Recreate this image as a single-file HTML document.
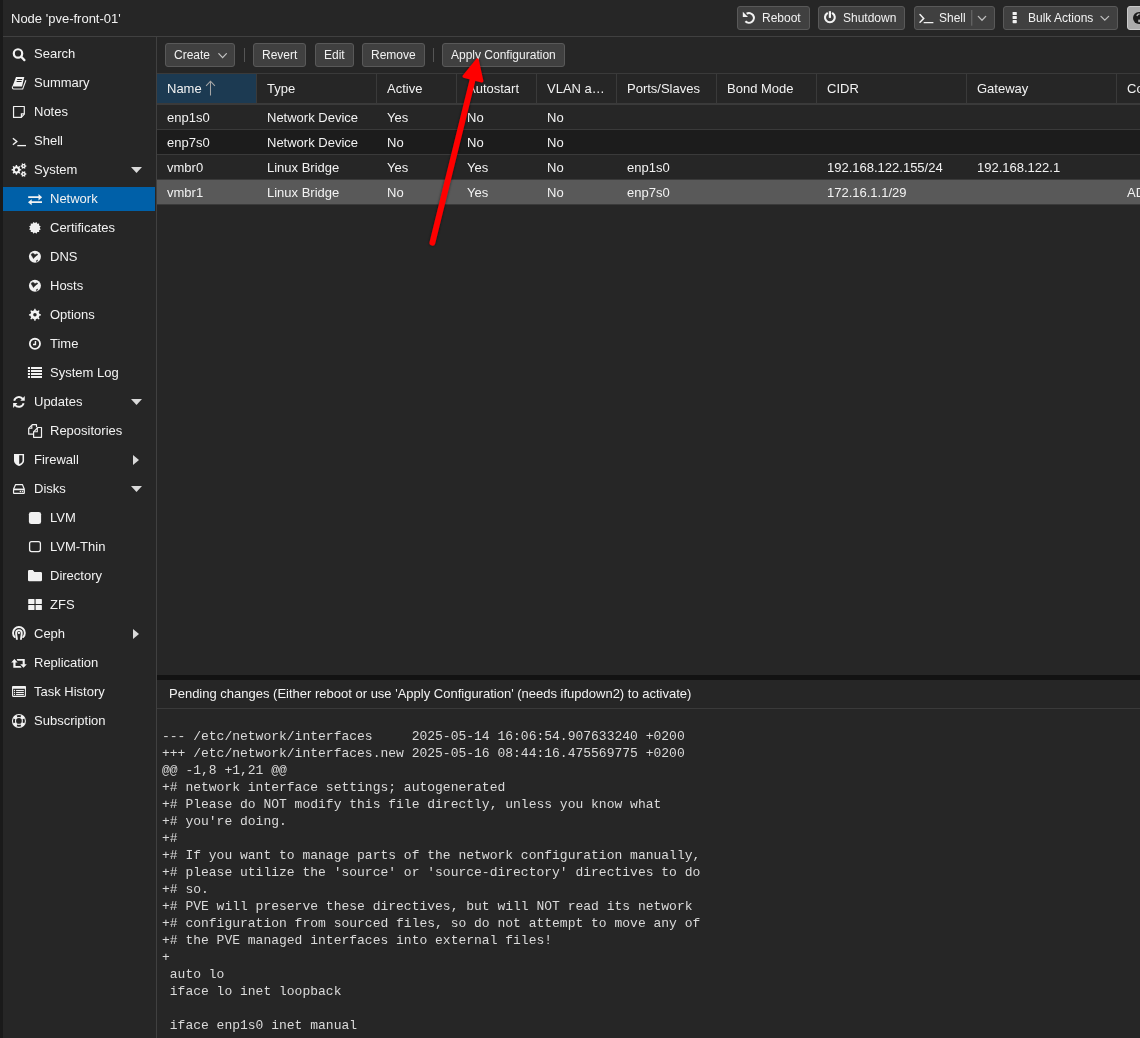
<!DOCTYPE html>
<html><head><meta charset="utf-8">
<style>
*{box-sizing:border-box;margin:0;padding:0}
body{-webkit-font-smoothing:antialiased;will-change:transform}
html,body{width:1140px;height:1038px;overflow:hidden;background:#262626;font-family:"Liberation Sans",sans-serif;font-size:13px;color:#f2f2f2}
.abs{position:absolute}
#strip{left:0;top:0;width:3px;height:1038px;background:#1a1a1a}
#hdr{left:3px;top:0;width:1137px;height:37px;background:#262626;border-bottom:1px solid #404040}
#title{left:11px;top:11px;line-height:16px;white-space:nowrap}
.tb{position:absolute;top:6px;height:24px;border:1px solid #595959;border-radius:3px;background:#404040;white-space:nowrap}
.tb span{position:absolute;top:4px;line-height:15px;font-size:12px}
.tb svg{position:absolute}
#side{left:3px;top:37px;width:153px;height:1001px;background:#262626}
.si{position:absolute;left:3px;width:152px;height:24px;white-space:nowrap}
.si span{position:absolute;top:4px;line-height:16px}
.si svg{position:absolute;fill:#f2f2f2}
.sel{background:#0060a8}
#main{left:156px;top:37px;width:984px;height:1001px;background:#262626;border-left:1px solid #404040}
.btn{position:absolute;top:43px;height:24px;border:1px solid #595959;border-radius:3px;background:#404040;white-space:nowrap}
.btn span{position:absolute;top:4px;line-height:15px;font-size:12px}
.sep{position:absolute;top:48px;width:1px;height:14px;background:#555}
#gh{left:157px;top:73px;width:983px;height:32px;background:#262626;border-top:1px solid #3a3a3a;border-bottom:2px solid #3a3a3a}
.hc{position:absolute;top:0;height:29px;border-right:1px solid #3a3a3a;white-space:nowrap}
.hc span{position:absolute;left:10px;top:7px;line-height:15px}
.row{position:absolute;left:157px;width:983px;height:25px;border-bottom:1px solid #3a3a3a;white-space:nowrap}
.row span{position:absolute;top:5px;line-height:15px}
.alt{background:#1c1c1c}
.rsel{background:#595959}
#split{left:157px;top:675px;width:983px;height:5px;background:#121212}
#ph{left:157px;top:680px;width:983px;height:29px;background:#262626;border-bottom:1px solid #3a3a3a}
#ph span{position:absolute;left:12px;top:6px;line-height:15px;white-space:nowrap}
#pre{left:162px;top:728px;font-family:"Liberation Mono",monospace;font-size:13px;line-height:17px;white-space:pre;color:#dadada}
</style></head><body>
<div class="abs" id="strip"></div>
<div class="abs" id="hdr"></div>
<div class="abs" id="title">Node 'pve-front-01'</div>

<!-- top buttons -->
<div class="tb" style="left:737px;width:73px"><span style="left:24px">Reboot</span></div>
<div class="tb" style="left:818px;width:87px"><span style="left:24px">Shutdown</span></div>
<div class="tb" style="left:914px;width:81px"><span style="left:24px">Shell</span></div>
<div class="tb" style="left:1003px;width:115px"><span style="left:24px">Bulk Actions</span></div>
<div class="tb" style="left:1127px;width:40px;background:#ababab;border-color:#cacaca"></div>
<svg class="abs" style="left:700px;top:0" width="440" height="36" viewBox="700 0 440 36">
 <path d="M745.4 21.3 A4.9 4.9 0 1 0 746.6 13.6" fill="none" stroke="#f2f2f2" stroke-width="2.1"/>
 <path d="M742.8 11.8 V17 H748 Z" fill="#f2f2f2"/>
 <path d="M827.1 13.4 A4.9 4.9 0 1 0 832.7 13.4" fill="none" stroke="#f2f2f2" stroke-width="2.1" stroke-linecap="round"/>
 <path d="M829.9 11.2 V17.9" stroke="#f2f2f2" stroke-width="2.2"/>
 <path d="M920 14.6 L923.7 18.4 L920 22.2" fill="none" stroke="#f2f2f2" stroke-width="1.5" stroke-linecap="round"/>
 <path d="M924.2 22.7 H932.9" stroke="#f2f2f2" stroke-width="1.3" stroke-linecap="round"/>
 <rect x="971.2" y="10" width="1.1" height="15.7" fill="#6a6a6a"/>
 <path d="M978.3 16.4 L982 20.2 L985.7 16.4" fill="none" stroke="#bdbdbd" stroke-width="1.3" stroke-linecap="round"/>
 <rect x="1012.6" y="11.9" width="4.2" height="3.1" rx="0.6" fill="#f2f2f2"/>
 <rect x="1012.6" y="16" width="4.2" height="3.1" rx="0.6" fill="#f2f2f2"/>
 <rect x="1012.6" y="20.1" width="4.2" height="3.1" rx="0.6" fill="#f2f2f2"/>
 <path d="M1101 16.4 L1104.8 20.2 L1108.6 16.4" fill="none" stroke="#bdbdbd" stroke-width="1.3" stroke-linecap="round"/>
 <circle cx="1139" cy="18" r="6" fill="#1a1a1a"/>
 <path d="M1137 16 Q1137.4 14 1139.6 14" fill="none" stroke="#ababab" stroke-width="1.5"/><rect x="1138.2" y="19.6" width="2" height="2.6" fill="#ababab"/>
</svg>
<div class="abs" id="side"></div>
<div class="abs" id="main"></div>

<!-- toolbar -->
<div class="btn" style="left:165px;width:70px"><span style="left:8px">Create</span>
 <svg style="position:absolute;left:52px;top:9px" width="10" height="7" viewBox="0 0 10 7"><path d="M0.8 0.6 L4.6 4.6 L8.4 0.6" fill="none" stroke="#c4c4c4" stroke-width="1.2" stroke-linecap="round"/></svg></div>
<div class="sep" style="left:244px"></div>
<div class="btn" style="left:253px;width:53px"><span style="left:8px">Revert</span></div>
<div class="btn" style="left:315px;width:39px"><span style="left:8px">Edit</span></div>
<div class="btn" style="left:362px;width:63px"><span style="left:8px">Remove</span></div>
<div class="sep" style="left:433px"></div>
<div class="btn" style="left:442px;width:123px"><span style="left:8px">Apply Configuration</span></div>

<!-- grid header -->
<div class="abs" id="gh">
 <div class="hc" style="left:0;width:100px;background:#1c3a52"><span>Name</span>
  <svg style="position:absolute;left:48px;top:6px" width="11" height="16" viewBox="0 0 11 16"><path d="M5.5 1.2 V15.6 M1.1 5.9 L5.5 1.2 L9.9 5.9" fill="none" stroke="#a6a6a6" stroke-width="1.05"/></svg></div>
 <div class="hc" style="left:100px;width:120px"><span>Type</span></div>
 <div class="hc" style="left:220px;width:80px"><span>Active</span></div>
 <div class="hc" style="left:300px;width:80px"><span>Autostart</span></div>
 <div class="hc" style="left:380px;width:80px"><span>VLAN a…</span></div>
 <div class="hc" style="left:460px;width:100px"><span>Ports/Slaves</span></div>
 <div class="hc" style="left:560px;width:100px"><span>Bond Mode</span></div>
 <div class="hc" style="left:660px;width:150px"><span>CIDR</span></div>
 <div class="hc" style="left:810px;width:150px"><span>Gateway</span></div>
 <div class="hc" style="left:960px;width:150px"><span>Comment</span></div>
</div>

<!-- rows -->
<div class="row" style="top:105px"><span style="left:10px">enp1s0</span><span style="left:110px">Network Device</span><span style="left:230px">Yes</span><span style="left:310px">No</span><span style="left:390px">No</span></div>
<div class="row alt" style="top:130px"><span style="left:10px">enp7s0</span><span style="left:110px">Network Device</span><span style="left:230px">No</span><span style="left:310px">No</span><span style="left:390px">No</span></div>
<div class="row" style="top:155px"><span style="left:10px">vmbr0</span><span style="left:110px">Linux Bridge</span><span style="left:230px">Yes</span><span style="left:310px">Yes</span><span style="left:390px">No</span><span style="left:470px">enp1s0</span><span style="left:670px">192.168.122.155/24</span><span style="left:820px">192.168.122.1</span></div>
<div class="row rsel" style="top:180px"><span style="left:10px">vmbr1</span><span style="left:110px">Linux Bridge</span><span style="left:230px">No</span><span style="left:310px">Yes</span><span style="left:390px">No</span><span style="left:470px">enp7s0</span><span style="left:670px">172.16.1.1/29</span><span style="left:970px">ADMIN</span></div>

<div class="abs" id="split"></div>
<div class="abs" id="ph"><span>Pending changes (Either reboot or use 'Apply Configuration' (needs ifupdown2) to activate)</span></div>
<div class="abs" id="pre">--- /etc/network/interfaces     2025-05-14 16:06:54.907633240 +0200
+++ /etc/network/interfaces.new 2025-05-16 08:44:16.475569775 +0200
@@ -1,8 +1,21 @@
+# network interface settings; autogenerated
+# Please do NOT modify this file directly, unless you know what
+# you're doing.
+#
+# If you want to manage parts of the network configuration manually,
+# please utilize the 'source' or 'source-directory' directives to do
+# so.
+# PVE will preserve these directives, but will NOT read its network
+# configuration from sourced files, so do not attempt to move any of
+# the PVE managed interfaces into external files!
+
 auto lo
 iface lo inet loopback

 iface enp1s0 inet manual
</div>

<div class="si" style="top:42px"><span style="left:31px">Search</span></div>
<div class="si" style="top:71px"><span style="left:31px">Summary</span></div>
<div class="si" style="top:100px"><span style="left:31px">Notes</span></div>
<div class="si" style="top:129px"><span style="left:31px">Shell</span></div>
<div class="si" style="top:158px"><span style="left:31px">System</span></div>
<svg class="abs" style="left:131px;top:167px" width="11" height="6" viewBox="0 0 11 6"><path d="M0 0 H11 L5.5 6Z" fill="#d9d9d9"/></svg>
<div class="si sel" style="top:187px"><span style="left:47px">Network</span></div>
<div class="si" style="top:216px"><span style="left:47px">Certificates</span></div>
<div class="si" style="top:245px"><span style="left:47px">DNS</span></div>
<div class="si" style="top:274px"><span style="left:47px">Hosts</span></div>
<div class="si" style="top:303px"><span style="left:47px">Options</span></div>
<div class="si" style="top:332px"><span style="left:47px">Time</span></div>
<div class="si" style="top:361px"><span style="left:47px">System Log</span></div>
<div class="si" style="top:390px"><span style="left:31px">Updates</span></div>
<svg class="abs" style="left:131px;top:399px" width="11" height="6" viewBox="0 0 11 6"><path d="M0 0 H11 L5.5 6Z" fill="#d9d9d9"/></svg>
<div class="si" style="top:419px"><span style="left:47px">Repositories</span></div>
<div class="si" style="top:448px"><span style="left:31px">Firewall</span></div>
<svg class="abs" style="left:133px;top:455px" width="6" height="10" viewBox="0 0 6 10"><path d="M0 0 V10 L6 5Z" fill="#d9d9d9"/></svg>
<div class="si" style="top:477px"><span style="left:31px">Disks</span></div>
<svg class="abs" style="left:131px;top:486px" width="11" height="6" viewBox="0 0 11 6"><path d="M0 0 H11 L5.5 6Z" fill="#d9d9d9"/></svg>
<div class="si" style="top:506px"><span style="left:47px">LVM</span></div>
<div class="si" style="top:535px"><span style="left:47px">LVM-Thin</span></div>
<div class="si" style="top:564px"><span style="left:47px">Directory</span></div>
<div class="si" style="top:593px"><span style="left:47px">ZFS</span></div>
<div class="si" style="top:622px"><span style="left:31px">Ceph</span></div>
<svg class="abs" style="left:133px;top:629px" width="6" height="10" viewBox="0 0 6 10"><path d="M0 0 V10 L6 5Z" fill="#d9d9d9"/></svg>
<div class="si" style="top:651px"><span style="left:31px">Replication</span></div>
<div class="si" style="top:680px"><span style="left:31px">Task History</span></div>
<div class="si" style="top:709px"><span style="left:31px">Subscription</span></div>
<svg class="abs" style="left:0;top:0" width="160" height="740" viewBox="0 0 160 740"><circle cx="18" cy="53.45" r="4.2" fill="none" stroke="#f2f2f2" stroke-width="2.2"/><path d="M21.2 56.8 L24.4 60.1" stroke="#f2f2f2" stroke-width="2.3" stroke-linecap="round"/><path d="M16 77 H24.3 L22 86.6 H12.4 Z" fill="#f2f2f2"/><path d="M12.5 86.4 Q12 89 13.7 89 H22.7 L25.9 80.2" fill="none" stroke="#f2f2f2" stroke-width="1.1"/><path d="M17.2 79.5 H22.2 M16.6 81.5 H21.6" stroke="#262626" stroke-width="1"/><path d="M13.6 87.6 H22.2" stroke="#262626" stroke-width="0.8"/><path d="M13.55 106.5 H24.3 V114.2 L21.3 117.4 H13.55 Z" fill="none" stroke="#f2f2f2" stroke-width="1.2" stroke-linejoin="round"/><path d="M21.4 117.2 V113.9 H24.2" fill="none" stroke="#f2f2f2" stroke-width="1.2"/><path d="M12.9 138.3 L16.8 141.5 L12.9 144.8" fill="none" stroke="#f2f2f2" stroke-width="1.4"/><path d="M17.3 145.6 H26" stroke="#f2f2f2" stroke-width="1.3"/><path fill-rule="evenodd" d="M20.04 169.06 L21.28 169.19 L21.28 170.49 L20.04 170.62 L19.53 171.85 L20.32 172.81 L19.39 173.74 L18.43 172.95 L17.20 173.46 L17.07 174.70 L15.77 174.70 L15.64 173.46 L14.41 172.95 L13.45 173.74 L12.52 172.81 L13.31 171.85 L12.80 170.62 L11.56 170.49 L11.56 169.19 L12.80 169.06 L13.31 167.83 L12.52 166.87 L13.45 165.94 L14.41 166.73 L15.64 166.22 L15.77 164.98 L17.07 164.98 L17.20 166.22 L18.43 166.73 L19.39 165.94 L20.32 166.87 L19.53 167.83Z M18.02 169.84 A1.6 1.6 0 1 0 14.82 169.84 A1.6 1.6 0 1 0 18.02 169.84Z" fill="#f2f2f2"/><path fill-rule="evenodd" d="M25.62 165.38 L26.41 165.46 L26.41 166.60 L25.62 166.68 L25.13 167.53 L25.46 168.25 L24.48 168.82 L24.01 168.17 L23.03 168.17 L22.56 168.82 L21.58 168.25 L21.91 167.53 L21.42 166.68 L20.63 166.60 L20.63 165.46 L21.42 165.38 L21.91 164.53 L21.58 163.81 L22.56 163.24 L23.03 163.89 L24.01 163.89 L24.48 163.24 L25.46 163.81 L25.13 164.53Z M24.32 166.03 A0.8 0.8 0 1 0 22.72 166.03 A0.8 0.8 0 1 0 24.32 166.03Z" fill="#f2f2f2"/><path fill-rule="evenodd" d="M25.62 173.35 L26.41 173.43 L26.41 174.57 L25.62 174.65 L25.13 175.50 L25.46 176.22 L24.48 176.79 L24.01 176.14 L23.03 176.14 L22.56 176.79 L21.58 176.22 L21.91 175.50 L21.42 174.65 L20.63 174.57 L20.63 173.43 L21.42 173.35 L21.91 172.50 L21.58 171.78 L22.56 171.21 L23.03 171.86 L24.01 171.86 L24.48 171.21 L25.46 171.78 L25.13 172.50Z M24.32 174.00 A0.8 0.8 0 1 0 22.72 174.00 A0.8 0.8 0 1 0 24.32 174.00Z" fill="#f2f2f2"/><path d="M28.2 196.3 H38.5 V194 L42.1 197.2 L38.5 200.4 V198.1 H28.2 Z M42 201.2 H31.7 V199.3 L28 202.2 L31.7 205.2 V203 H42 Z" fill="#f2f2f2"/><path d="M40.73 229.39 L39.04 230.22 L39.17 232.08 L37.30 231.95 L36.48 233.64 L34.93 232.59 L33.38 233.64 L32.55 231.95 L30.69 232.08 L30.82 230.22 L29.13 229.39 L30.18 227.84 L29.13 226.29 L30.82 225.47 L30.69 223.60 L32.55 223.73 L33.38 222.04 L34.93 223.09 L36.48 222.04 L37.30 223.73 L39.17 223.60 L39.04 225.47 L40.73 226.29 L39.68 227.84Z" fill="#f2f2f2"/><circle cx="34.93" cy="256.84" r="6" fill="#f2f2f2"/><path d="M31.20 254.24 L32.76 253.20 L34.15 253.90 L35.02 254.76 L36.40 253.90 L37.96 254.42 L35.71 256.15 L34.15 257.71 L33.46 258.58 L32.59 257.02 L31.55 255.46Z M36.23 260.83 L37.27 260.14 L37.96 260.48 L36.58 261.70Z" fill="#262626" stroke="#262626" stroke-width="0.5" stroke-linejoin="round"/><circle cx="34.93" cy="285.84" r="6" fill="#f2f2f2"/><path d="M31.20 283.24 L32.76 282.20 L34.15 282.90 L35.02 283.76 L36.40 282.90 L37.96 283.42 L35.71 285.15 L34.15 286.71 L33.46 287.58 L32.59 286.02 L31.55 284.46Z M36.23 289.83 L37.27 289.14 L37.96 289.48 L36.58 290.70Z" fill="#262626" stroke="#262626" stroke-width="0.5" stroke-linejoin="round"/><path fill-rule="evenodd" d="M39.46 314.01 L40.90 314.23 L40.90 315.45 L39.46 315.67 L38.71 317.46 L39.58 318.63 L38.72 319.49 L37.55 318.62 L35.76 319.37 L35.54 320.81 L34.32 320.81 L34.10 319.37 L32.31 318.62 L31.14 319.49 L30.28 318.63 L31.15 317.46 L30.40 315.67 L28.96 315.45 L28.96 314.23 L30.40 314.01 L31.15 312.22 L30.28 311.05 L31.14 310.19 L32.31 311.06 L34.10 310.31 L34.32 308.87 L35.54 308.87 L35.76 310.31 L37.55 311.06 L38.72 310.19 L39.58 311.05 L38.71 312.22Z M36.68 314.84 A1.75 1.75 0 1 0 33.18 314.84 A1.75 1.75 0 1 0 36.68 314.84Z" fill="#f2f2f2"/><circle cx="34.93" cy="343.84" r="5.1" fill="none" stroke="#f2f2f2" stroke-width="1.8"/><path d="M35.45 341 V344.45 H33" fill="none" stroke="#f2f2f2" stroke-width="1.4"/><rect x="27.9" y="367" width="2.1" height="2" fill="#f2f2f2"/><rect x="31" y="367" width="11" height="2" fill="#f2f2f2"/><rect x="27.9" y="370" width="2.1" height="2" fill="#f2f2f2"/><rect x="31" y="370" width="11" height="2" fill="#f2f2f2"/><rect x="27.9" y="373" width="2.1" height="2" fill="#f2f2f2"/><rect x="31" y="373" width="11" height="2" fill="#f2f2f2"/><rect x="27.9" y="376" width="2.1" height="2" fill="#f2f2f2"/><rect x="31" y="376" width="11" height="2" fill="#f2f2f2"/><path d="M14.17 400.63 A4.9 4.9 0 0 1 22.9 399.1" fill="none" stroke="#f2f2f2" stroke-width="1.9"/><path d="M24.74 395.95 V400.8 H20.3 Z" fill="#f2f2f2"/><path d="M23.63 403.17 A4.9 4.9 0 0 1 14.89 404.7" fill="none" stroke="#f2f2f2" stroke-width="1.9"/><path d="M13.12 407.9 V403.06 H17.46 Z" fill="#f2f2f2"/><path d="M36.5 427.3 V424.7 H32.3 L28.7 428.3 V434.2 H33.4" fill="none" stroke="#f2f2f2" stroke-width="1.2" stroke-linejoin="round"/><path d="M28.8 428.3 H31.8 V425.1" fill="none" stroke="#f2f2f2" stroke-width="1.1"/><path d="M37.9 427.5 H41.5 V437.3 H33.6 V431.8 Z" fill="none" stroke="#f2f2f2" stroke-width="1.2" stroke-linejoin="round"/><path d="M33.7 431.8 H37.3 V428" fill="none" stroke="#f2f2f2" stroke-width="1.1"/><path d="M14 454 H24.05 V461 C24.05 463.2 21.5 465.2 19.02 466 C16.5 465.2 14 463.2 14 461 Z" fill="#f2f2f2"/><path d="M19.2 455.3 H22.5 V460.7 C22.5 462.2 21 463.3 19.2 463.9 Z" fill="#262626"/><path d="M13.55 489.2 L15.6 484.6 H22.4 L24.3 489.2" fill="none" stroke="#f2f2f2" stroke-width="1.2" stroke-linejoin="round"/><rect x="13.55" y="489.45" width="10.75" height="4" rx="0.5" fill="none" stroke="#f2f2f2" stroke-width="1.2"/><path d="M13.6 489.5 H24.3" stroke="#f2f2f2" stroke-width="1.5"/><circle cx="20.4" cy="491.53" r="0.75" fill="#f2f2f2"/><circle cx="22.49" cy="491.53" r="0.75" fill="#f2f2f2"/><rect x="28.9" y="511.9" width="12.2" height="12.2" rx="2.4" fill="#f2f2f2"/><rect x="29.6" y="541.6" width="10.8" height="10" rx="2" fill="none" stroke="#f2f2f2" stroke-width="1.3"/><path d="M28 571.3 Q28 570 29.3 570 H32.8 L34.4 571.9 H40.7 Q42 571.9 42 573.2 V579.9 Q42 581.2 40.7 581.2 H29.3 Q28 581.2 28 579.9 Z" fill="#f2f2f2"/><rect x="28.2" y="598.9" width="6.3" height="5.2" rx="0.7" fill="#f2f2f2"/><rect x="35.6" y="598.9" width="6.3" height="5.2" rx="0.7" fill="#f2f2f2"/><rect x="28.2" y="604.9" width="6.3" height="5.2" rx="0.7" fill="#f2f2f2"/><rect x="35.6" y="604.9" width="6.3" height="5.2" rx="0.7" fill="#f2f2f2"/><path d="M14.76 637.1 A5.9 5.9 0 1 1 23.1 637.1" fill="none" stroke="#f2f2f2" stroke-width="1.9" stroke-linecap="round"/><path d="M16.9 639.7 C16.9 637.5 16.13 635.5 16.13 632.93 A2.8 2.8 0 0 1 21.73 632.93 C21.73 635.5 20.95 637.5 20.95 639.7" fill="none" stroke="#f2f2f2" stroke-width="1.9"/><circle cx="18.93" cy="632.93" r="1.15" fill="#f2f2f2"/><path d="M11.21 662.5 L14.42 659.03 L17.63 662.5 H15.55 V665.96 H20.5 L21.6 667.87 H13.3 V662.5 Z" fill="#f2f2f2"/><path d="M26.82 664.23 L23.52 667.87 L20.23 664.23 H22.66 V660.76 H17.5 L16.59 659.03 H24.74 V664.23 Z" fill="#f2f2f2"/><rect x="12.6" y="686.5" width="12.8" height="9.9" rx="1" fill="none" stroke="#f2f2f2" stroke-width="1.1"/><rect x="12.1" y="686" width="13.85" height="2.75" rx="1" fill="#f2f2f2"/><circle cx="14.5" cy="690.5" r="0.65" fill="#f2f2f2"/><rect x="16.07" y="689.95" width="7.8" height="1.1" fill="#f2f2f2"/><circle cx="14.5" cy="692.5" r="0.65" fill="#f2f2f2"/><rect x="16.07" y="691.95" width="7.8" height="1.1" fill="#f2f2f2"/><circle cx="14.5" cy="694.5" r="0.65" fill="#f2f2f2"/><rect x="16.07" y="693.95" width="7.8" height="1.1" fill="#f2f2f2"/><circle cx="18.93" cy="720.93" r="7" fill="#f2f2f2"/><circle cx="18.93" cy="720.93" r="2.85" fill="#262626"/><path d="M16.62 715.50 A5.9 5.9 0 0 1 21.24 715.50 L20.49 717.25 A4.0 4.0 0 0 0 17.37 717.25Z M24.36 718.62 A5.9 5.9 0 0 1 24.36 723.24 L22.61 722.49 A4.0 4.0 0 0 0 22.61 719.37Z M21.24 726.36 A5.9 5.9 0 0 1 16.62 726.36 L17.37 724.61 A4.0 4.0 0 0 0 20.49 724.61Z M13.50 723.24 A5.9 5.9 0 0 1 13.50 718.62 L15.25 719.37 A4.0 4.0 0 0 0 15.25 722.49Z" fill="#262626"/></svg>


<!-- ARROW -->
<svg class="abs" style="left:0;top:0" width="1140" height="1038" viewBox="0 0 1140 1038">
 <defs><filter id="sh" x="-50%" y="-50%" width="200%" height="200%"><feDropShadow dx="0" dy="0" stdDeviation="1.5" flood-color="#000" flood-opacity="0.6"/></filter></defs>
 <g filter="url(#sh)">
 <line x1="432.4" y1="242.8" x2="474.5" y2="72" stroke="#ff0000" stroke-width="5.8" stroke-linecap="round"/>
 <path d="M477.3 59.8 L482 81.1 L463.9 76.4 Z" fill="#ff0000" stroke="#ff0000" stroke-width="2.8" stroke-linejoin="round"/>
 </g>
</svg>
</body></html>
